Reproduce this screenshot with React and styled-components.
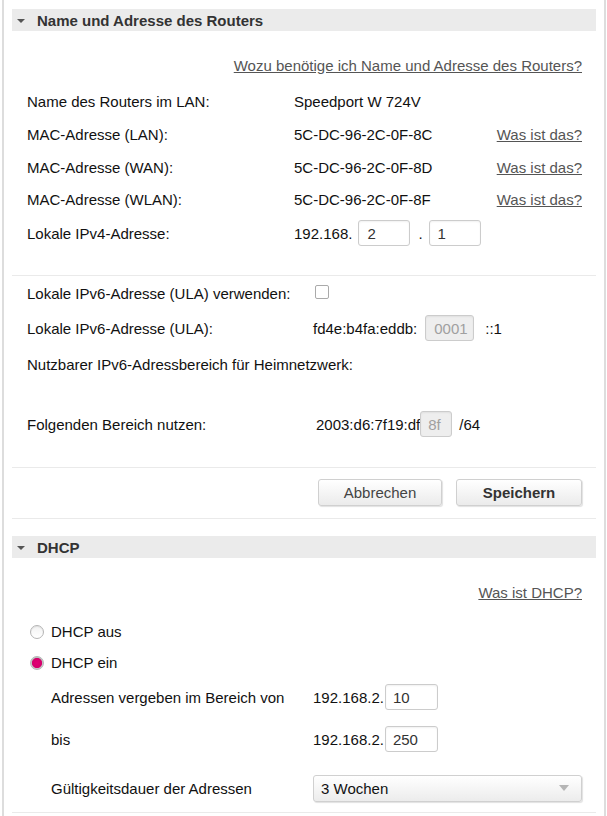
import React from "react";
import styled, { createGlobalStyle } from "styled-components";

const GlobalStyle = createGlobalStyle`
  body {
    margin: 0;
    background: #ffffff;
    font-family: "Liberation Sans", Arial, sans-serif;
    font-size: 15px;
    color: #111111;
  }
`;

const Frame = styled.div`
  margin-left: 2px;
  width: 604px;
  min-height: 816px;
  box-sizing: border-box;
  border-left: 2px solid #dddddd;
  border-right: 2px solid #dddddd;
  padding: 9px 8px 0 8px;
`;

const SectionHeader = styled.div`
  height: 22px;
  background: #ebebeb;
  display: flex;
  align-items: center;
  margin-top: ${({ top }) => top || 0}px;
  font-weight: bold;
  font-size: 15px;
  color: #333333;
`;

const Caret = styled.span`
  width: 0;
  height: 0;
  border-left: 4px solid transparent;
  border-right: 4px solid transparent;
  border-top: 4px solid #555555;
  margin: 2px 12px 0 5px;
`;

const Row = styled.div`
  display: flex;
  align-items: center;
  height: ${({ h }) => h || 32}px;
  margin-top: ${({ top }) => top || 0}px;
  padding-left: ${({ indent }) => indent || 15}px;
  padding-right: 14px;
  justify-content: ${({ end }) => (end ? "flex-end" : "flex-start")};
`;

const Label = styled.span`
  width: ${({ w }) => w}px;
  flex-shrink: 0;
  white-space: nowrap;
`;

const Value = styled.span`
  display: flex;
  align-items: center;
  flex: 1;
  margin-left: ${({ ml }) => ml || 0}px;
`;

const HelpLink = styled.a`
  color: #555555;
  text-decoration: underline;
  margin-left: auto;
  cursor: pointer;
`;

const Separator = styled.div`
  height: 1px;
  background: #eaeaea;
  margin-top: ${({ top }) => top || 0}px;
`;

const Field = styled.input`
  box-sizing: border-box;
  width: ${({ w }) => w}px;
  height: 26px;
  border: 1px solid #cccccc;
  border-radius: 3px;
  box-shadow: inset 0 1px 2px rgba(0, 0, 0, 0.06);
  padding: 0 0 0 ${({ pad }) => (pad === undefined ? 8 : pad)}px;
  margin-left: ${({ ml }) => ml || 0}px;
  font-family: "Liberation Sans", Arial, sans-serif;
  font-size: 15px;
  color: ${({ disabled }) => (disabled ? "#a0a0a0" : "#333333")};
  background: ${({ disabled }) => (disabled ? "#eeeeee" : "#ffffff")};
`;

const Sep = styled.span`
  margin: 0 ${({ mr }) => mr || 0}px 0 ${({ ml }) => ml || 0}px;
`;

const Check = styled.span`
  box-sizing: border-box;
  width: 14px;
  height: 14px;
  border: 1px solid #aaaaaa;
  border-radius: 2px;
  background: #ffffff;
  margin: -2px 0 0 2px;
`;

const ButtonBar = styled.div`
  display: flex;
  justify-content: flex-end;
  gap: 14px;
  padding: 11px 14px 12px 0;
`;

const Button = styled.button`
  width: ${({ w }) => w}px;
  height: 27px;
  border: 1px solid #d0d0d0;
  border-radius: 3px;
  background: linear-gradient(#ffffff, #ebebeb);
  box-shadow: 1px 1px 1px rgba(0, 0, 0, 0.12);
  font-family: "Liberation Sans", Arial, sans-serif;
  font-size: 15px;
  font-weight: ${({ primary }) => (primary ? "bold" : "normal")};
  color: ${({ primary }) => (primary ? "#333333" : "#444444")};
`;

const Radio = styled.span`
  box-sizing: border-box;
  width: 14px;
  height: 14px;
  border-radius: 50%;
  margin-right: 7px;
  border: 1px solid #b5b5b5;
  background: ${({ on }) =>
    on
      ? "radial-gradient(circle, #e20074 0, #d4006c 55%, #c8c8c8 65%, #e8e8e8 100%)"
      : "linear-gradient(#f2f2f2, #ffffff)"};
  box-shadow: inset 0 1px 1px rgba(0, 0, 0, 0.08);
`;

const Select = styled.div`
  box-sizing: border-box;
  width: 269px;
  height: 27px;
  border: 1px solid #d0d0d0;
  border-radius: 3px;
  background: linear-gradient(#ffffff, #ececec);
  box-shadow: 1px 1px 1px rgba(0, 0, 0, 0.12);
  display: flex;
  align-items: center;
  padding: 0 12px 0 7px;
  color: #111111;
`;

const SelectArrow = styled.span`
  margin-left: auto;
  width: 0;
  height: 0;
  border-left: 5px solid transparent;
  border-right: 5px solid transparent;
  border-top: 6px solid #b5b5b5;
`;

const macRows = [
  { label: "MAC-Adresse (LAN):", value: "5C-DC-96-2C-0F-8C", h: 33 },
  { label: "MAC-Adresse (WAN):", value: "5C-DC-96-2C-0F-8D", h: 32 },
  { label: "MAC-Adresse (WLAN):", value: "5C-DC-96-2C-0F-8F", h: 32 }
];

const App = () => (
  <>
    <GlobalStyle />
    <Frame>
      <SectionHeader>
        <Caret />
        Name und Adresse des Routers
      </SectionHeader>

      <Row end top={18}>
        <HelpLink>Wozu benötige ich Name und Adresse des Routers?</HelpLink>
      </Row>
      <Row h={33} top={4}>
        <Label w={267}>Name des Routers im LAN:</Label>
        <Value>Speedport W 724V</Value>
      </Row>
      {macRows.map(item => (
        <Row h={item.h} key={item.label}>
          <Label w={267}>{item.label}</Label>
          <Value>{item.value}</Value>
          <HelpLink>Was ist das?</HelpLink>
        </Row>
      ))}
      <Row h={36}>
        <Label w={267}>Lokale IPv4-Adresse:</Label>
        <Value>
          192.168.
          <Field w={52} ml={6} defaultValue="2" />
          <Sep ml={8} mr={6}>.</Sep>
          <Field w={52} defaultValue="1" />
        </Value>
      </Row>

      <Separator top={24} />
      <Row h={34}>
        <Label w={286}>Lokale IPv6-Adresse (ULA) verwenden:</Label>
        <Check />
      </Row>
      <Row h={36}>
        <Label w={286}>Lokale IPv6-Adresse (ULA):</Label>
        <Value>
          fd4e:b4fa:eddb:
          <Field w={49} ml={8} disabled defaultValue="0001" />
          <Sep ml={11}>::1</Sep>
        </Value>
      </Row>
      <Row h={36}>
        <Label>Nutzbarer IPv6-Adressbereich für Heimnetzwerk:</Label>
      </Row>
      <Row h={36} top={24}>
        <Label w={286}>Folgenden Bereich nutzen:</Label>
        <Value ml={3}>
          2003:d6:7f19:df
          <Field w={32} pad={7} disabled defaultValue="8f" />
          <Sep ml={7}>/64</Sep>
        </Value>
      </Row>

      <Separator top={25} />
      <ButtonBar>
        <Button w={124}>Abbrechen</Button>
        <Button w={126} primary>
          Speichern
        </Button>
      </ButtonBar>
      <Separator />

      <SectionHeader top={17}>
        <Caret />
        DHCP
      </SectionHeader>
      <Row end top={18}>
        <HelpLink>Was ist DHCP?</HelpLink>
      </Row>
      <Row h={31} top={8} indent={18}>
        <Radio />
        DHCP aus
      </Row>
      <Row h={31} indent={18}>
        <Radio on />
        DHCP ein
      </Row>
      <Row h={34} top={2} indent={39}>
        <Label w={262}>Adressen vergeben im Bereich von</Label>
        <Value>
          192.168.2.
          <Field w={53} ml={1} pad={7} defaultValue="10" />
        </Value>
      </Row>
      <Row h={34} top={8} indent={39}>
        <Label w={262}>bis</Label>
        <Value>
          192.168.2.
          <Field w={53} ml={1} pad={7} defaultValue="250" />
        </Value>
      </Row>
      <Row h={34} top={15} indent={39}>
        <Label w={262}>Gültigkeitsdauer der Adressen</Label>
        <Select>
          3 Wochen
          <SelectArrow />
        </Select>
      </Row>
      <Separator top={7} />
    </Frame>
  </>
);

export default App;
